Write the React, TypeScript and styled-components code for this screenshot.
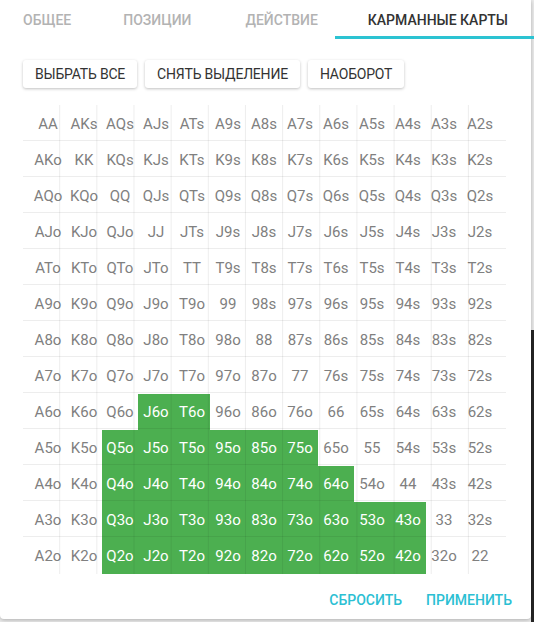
import * as React from 'react'
import styled, { createGlobalStyle } from 'styled-components'

const GlobalStyle = createGlobalStyle`
  html, body {
    margin: 0;
    padding: 0;
  }
  body {
    width: 534px;
    height: 622px;
    overflow: hidden;
    font-family: Roboto, "Liberation Sans", sans-serif;
    background:
      linear-gradient(#ececec, #ececec) 0 0 / 100% 330px no-repeat,
      linear-gradient(#ececec, #ececec) 0 0 / 531px 100% no-repeat,
      #262626;
  }
`

const RANKS = ['A', 'K', 'Q', 'J', 'T', '9', '8', '7', '6', '5', '4', '3', '2']

// selected offsuit hands, row index -> [from col, to col]
const SELECTED: Record<number, [number, number]> = {
  8: [3, 4],
  9: [2, 7],
  10: [2, 8],
  11: [2, 10],
  12: [2, 10],
}

const handName = (row: number, col: number) => {
  if (row === col) return RANKS[row] + RANKS[col]
  if (col > row) return RANKS[row] + RANKS[col] + 's'
  return RANKS[col] + RANKS[row] + 'o'
}

const isSelected = (row: number, col: number) => {
  const range = SELECTED[row]
  return !!range && col >= range[0] && col <= range[1]
}

const Dialog = styled.div`
  width: 531px;
  height: 619px;
  background: #fff;
  border-radius: 0 0 4px 4px;
  box-shadow: 0 1px 4px rgba(0, 0, 0, 0.28);
  display: flex;
  flex-direction: column;
`

const TabBar = styled.div`
  display: flex;
  height: 39px;
  margin-left: -3px;
`

const Tab = styled.div<{ $active?: boolean }>`
  display: flex;
  align-items: center;
  padding: 0 26px;
  box-sizing: border-box;
  font-size: 14px;
  font-weight: 500;
  text-transform: uppercase;
  white-space: nowrap;
  color: ${({ $active }) => ($active ? '#333' : '#b3b3b3')};
  &:nth-child(3) {
    padding-left: 28px;
  }
  ${({ $active }) =>
    $active &&
    `
    flex: 1;
    margin-left: -9px;
    padding-left: 33px;
    border-bottom: 3px solid #2cc3d2;
    padding-top: 3px;
  `}
`

const Toolbar = styled.div`
  display: flex;
  gap: 8px;
  padding: 21px 23px 0;
`

const ActionButton = styled.button`
  height: 28px;
  padding: 0 12px;
  border: none;
  border-radius: 3px;
  background: #fff;
  color: #333;
  font-family: inherit;
  font-size: 14px;
  letter-spacing: -0.2px;
  text-transform: uppercase;
  box-shadow: 0 1px 3px rgba(0, 0, 0, 0.25);
`

const Board = styled.div`
  position: relative;
  width: 483px;
  height: 469px;
  margin: 17px 0 0 23px;

  &::before,
  &::after {
    content: '';
    position: absolute;
    pointer-events: none;
  }

  /* vertical rules */
  &::before {
    top: 0;
    bottom: 0;
    left: 0;
    right: calc(100% / 13);
    background: linear-gradient(
        to right,
        transparent calc(100% - 1px),
        rgba(0, 0, 0, 0.07) calc(100% - 1px)
      )
      0 0 / calc(100% / 12) 100% repeat-x;
  }

  /* horizontal rules */
  &::after {
    top: 0;
    bottom: 36px;
    left: 0;
    right: 0;
    background: linear-gradient(
        to bottom,
        transparent 35px,
        rgba(0, 0, 0, 0.07) 35px
      )
      0 0 / 100% 36px repeat-y;
  }
`

const HandGrid = styled.div`
  display: grid;
  grid-template-columns: repeat(13, 36px);
  grid-auto-rows: 36px;
  margin: 1px 0 0 7px;
`

const Hand = styled.div<{ $on: boolean }>`
  display: flex;
  align-items: center;
  justify-content: center;
  font-size: 15px;
  color: ${({ $on }) => ($on ? '#fff' : '#808080')};
  background: ${({ $on }) => ($on ? '#4caf50' : 'transparent')};
`

const Footer = styled.div`
  display: flex;
  justify-content: flex-end;
  align-items: center;
  gap: 24px;
  flex: 1;
  padding: 6px 19px 0 0;
`

const FlatButton = styled.button`
  border: none;
  background: none;
  padding: 0;
  font-family: inherit;
  font-size: 14px;
  font-weight: 500;
  text-transform: uppercase;
  color: #2bc0d3;
`

export default function App() {
  return (
    <>
      <GlobalStyle />
      <Dialog>
        <TabBar>
          <Tab>Общее</Tab>
          <Tab>Позиции</Tab>
          <Tab>Действие</Tab>
          <Tab $active>Карманные карты</Tab>
        </TabBar>
        <Toolbar>
          <ActionButton>Выбрать все</ActionButton>
          <ActionButton>Снять выделение</ActionButton>
          <ActionButton>Наоборот</ActionButton>
        </Toolbar>
        <Board>
          <HandGrid>
            {RANKS.map((_, row) =>
              RANKS.map((__, col) => (
                <Hand key={`${row}-${col}`} $on={isSelected(row, col)}>
                  {handName(row, col)}
                </Hand>
              ))
            )}
          </HandGrid>
        </Board>
        <Footer>
          <FlatButton>Сбросить</FlatButton>
          <FlatButton>Применить</FlatButton>
        </Footer>
      </Dialog>
    </>
  )
}
